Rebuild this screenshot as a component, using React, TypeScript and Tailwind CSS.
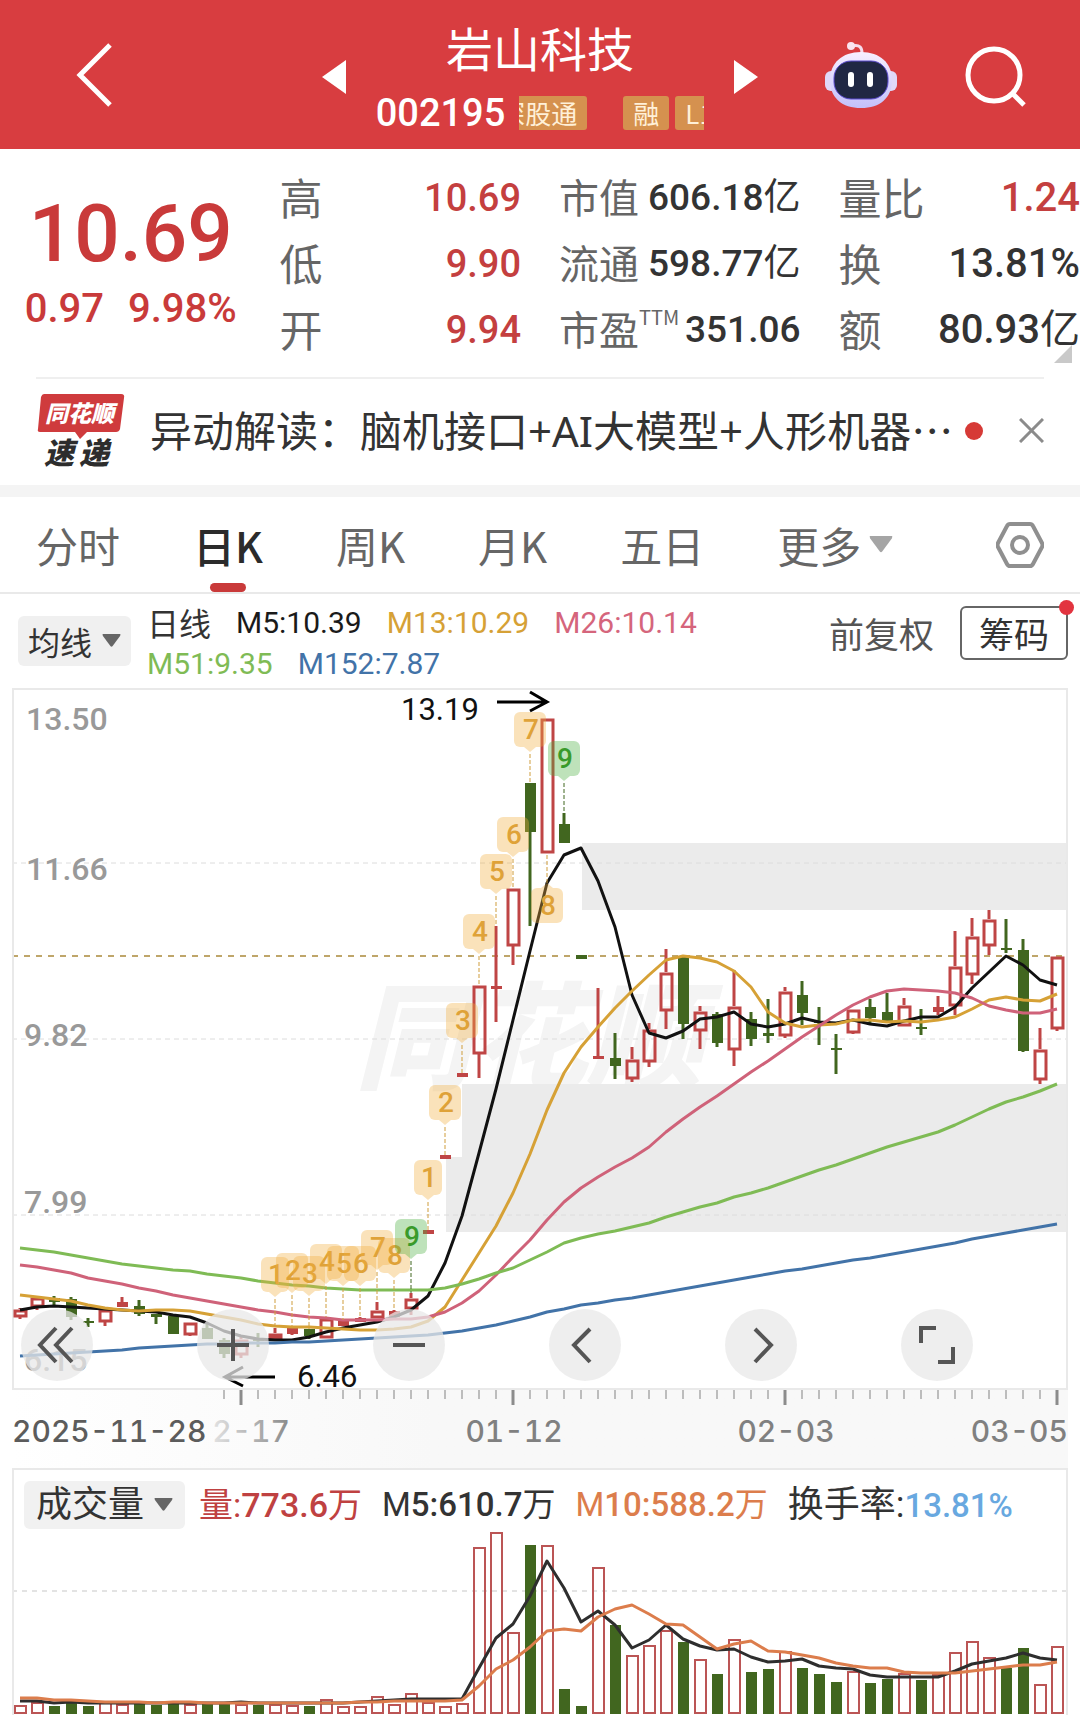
import type { ReactNode } from "react";

const RED = "#bf4545";
const GREEN = "#41661f";

const STEP = 17;
const FIRST_X = 20;

const xAt = (index: number) => FIRST_X + index * STEP;

// kind: r = hollow red, f = solid red, g = green
type Candle = [kind: "r" | "f" | "g", high: number, top: number, bottom: number, low: number];

// y positions on the plot, top to bottom
const candles: Candle[] = [
    ["r", 1308, 1309, 1317, 1319],
    ["r", 1297, 1297, 1307, 1310],
    ["g", 1296, 1298, 1302, 1305],
    ["g", 1297, 1299, 1317, 1320],
    ["g", 1318, 1321, 1323, 1327],
    ["r", 1307, 1309, 1322, 1326],
    ["f", 1297, 1302, 1307, 1307],
    ["g", 1300, 1306, 1314, 1316],
    ["g", 1314, 1314, 1317, 1324],
    ["g", 1315, 1316, 1334, 1334],
    ["r", 1322, 1322, 1335, 1336],
    ["g", 1324, 1328, 1339, 1339],
    ["g", 1338, 1340, 1354, 1358],
    ["r", 1337, 1339, 1355, 1358],
    ["g", 1333, 1339, 1341, 1347],
    ["r", 1328, 1333, 1339, 1339],
    ["f", 1326, 1328, 1334, 1335],
    ["g", 1329, 1329, 1336, 1339],
    ["r", 1317, 1318, 1338, 1338],
    ["f", 1320, 1321, 1326, 1326],
    ["f", 1317, 1318, 1322, 1322],
    ["r", 1302, 1310, 1318, 1318],
    ["f", 1310, 1311, 1317, 1317],
    ["r", 1293, 1298, 1309, 1315],
    ["f", 1230, 1230, 1234, 1234],
    ["f", 1155, 1155, 1159, 1159],
    ["f", 1073, 1073, 1077, 1077],
    ["r", 985, 985, 1054, 1078],
    ["f", 926, 986, 989, 1022],
    ["r", 888, 888, 946, 965],
    ["g", 783, 783, 832, 926],
    ["r", 718, 718, 853, 853],
    ["g", 813, 824, 843, 843],
    ["g", 955, 955, 959, 959],
    ["f", 988, 1056, 1059, 1059],
    ["g", 1033, 1058, 1066, 1079],
    ["r", 1047, 1059, 1079, 1082],
    ["r", 1023, 1029, 1062, 1067],
    ["r", 949, 972, 1011, 1029],
    ["g", 957, 957, 1024, 1039],
    ["r", 1006, 1011, 1031, 1049],
    ["g", 1012, 1014, 1043, 1047],
    ["r", 970, 1006, 1050, 1066],
    ["g", 1012, 1019, 1039, 1046],
    ["g", 999, 1033, 1036, 1043],
    ["r", 987, 991, 1036, 1038],
    ["g", 981, 995, 1013, 1025],
    ["g", 1007, 1021, 1023, 1045],
    ["g", 1034, 1048, 1050, 1074],
    ["r", 1009, 1009, 1033, 1034],
    ["g", 999, 1007, 1018, 1024],
    ["g", 993, 1012, 1022, 1022],
    ["r", 998, 1005, 1026, 1026],
    ["g", 1009, 1027, 1029, 1035],
    ["f", 996, 1007, 1012, 1015],
    ["r", 931, 966, 1006, 1015],
    ["r", 918, 936, 975, 984],
    ["r", 910, 919, 946, 955],
    ["g", 919, 948, 950, 953],
    ["g", 939, 950, 1051, 1052],
    ["r", 1028, 1049, 1080, 1084],
    ["r", 956, 956, 1029, 1031],
];

const ma5 = [
    1310, 1307, 1306, 1307, 1308, 1309, 1310, 1311, 1312, 1315, 1317, 1323, 1331, 1336, 1339, 1340,
    1340, 1337, 1332, 1328, 1325, 1322, 1317, 1310, 1296, 1263, 1216, 1153, 1089, 1020, 951, 883,
    855, 848, 881, 927, 995, 1033, 1038, 1031, 1019, 1017, 1012, 1024, 1027, 1024, 1018, 1022,
    1023, 1020, 1024, 1026, 1021, 1017, 1017, 1007, 988, 972, 956, 965, 980, 985,
];

const ma13 = [
    1295, 1297, 1299, 1301, 1305, 1308, 1310, 1311, 1310, 1310, 1311, 1314, 1317, 1320, 1324, 1326,
    1327, 1327, 1328, 1329, 1330, 1330, 1329, 1327, 1321, 1307, 1280, 1253, 1226, 1193, 1154, 1110,
    1073, 1047, 1027, 1008, 991, 975, 960, 956, 958, 962, 971, 987, 1012, 1023, 1027, 1025,
    1024, 1020, 1020, 1022, 1021, 1022, 1020, 1017, 1009, 1000, 997, 1000, 1001, 994,
];

const ma26 = [
    1265, 1267, 1270, 1273, 1278, 1281, 1284, 1288, 1291, 1295, 1298, 1301, 1304, 1307, 1310, 1312,
    1315, 1317, 1318, 1320, 1320, 1320, 1319, 1319, 1317, 1312, 1303, 1291, 1275, 1257, 1240, 1220,
    1202, 1188, 1177, 1167, 1158, 1147, 1132, 1119, 1107, 1096, 1084, 1072, 1061, 1049, 1037, 1026,
    1015, 1005, 997, 991, 989, 990, 991, 993, 998, 1006, 1010, 1013, 1013, 1009,
];

const ma51 = [
    1248, 1250, 1252, 1255, 1258, 1261, 1264, 1266, 1268, 1270, 1271, 1274, 1276, 1278, 1281, 1283,
    1285, 1286, 1288, 1289, 1290, 1290, 1290, 1290, 1290, 1288, 1284, 1279, 1273, 1268, 1260, 1252,
    1243, 1238, 1234, 1231, 1227, 1223, 1217, 1212, 1207, 1203, 1197, 1193, 1188, 1182, 1176, 1170,
    1165, 1159, 1153, 1147, 1142, 1137, 1132, 1125, 1117, 1109, 1102, 1097, 1091, 1084,
];

const ma152 = [
    1356, 1355, 1354, 1353, 1352, 1351, 1350, 1348, 1347, 1346, 1345, 1344, 1344, 1343, 1343, 1343,
    1342, 1342, 1341, 1340, 1339, 1338, 1337, 1336, 1335, 1333, 1331, 1328, 1325, 1321, 1317, 1312,
    1309, 1305, 1303, 1300, 1298, 1295, 1292, 1289, 1286, 1283, 1280, 1277, 1274, 1271, 1269, 1266,
    1263, 1260, 1258, 1255, 1252, 1249, 1246, 1243, 1239, 1236, 1233, 1230, 1227, 1224,
];

const volumes: [kind: "r" | "g", top: number][] = [
    ["r", 1705], ["r", 1702], ["g", 1706], ["g", 1702], ["g", 1706], ["r", 1702], ["r", 1704],
    ["g", 1703], ["g", 1705], ["g", 1703], ["r", 1704], ["g", 1704], ["g", 1704], ["r", 1704],
    ["g", 1705], ["r", 1704], ["r", 1705], ["g", 1706], ["r", 1699], ["r", 1706], ["r", 1706],
    ["r", 1696], ["r", 1704], ["r", 1693], ["r", 1702], ["r", 1706], ["r", 1703], ["r", 1547],
    ["r", 1532], ["r", 1632], ["g", 1545], ["r", 1545], ["g", 1689], ["g", 1706], ["r", 1567],
    ["g", 1625], ["r", 1655], ["r", 1645], ["r", 1630], ["g", 1642], ["r", 1659], ["g", 1674],
    ["r", 1639], ["g", 1672], ["g", 1669], ["r", 1651], ["g", 1668], ["g", 1674], ["g", 1682],
    ["r", 1671], ["g", 1683], ["g", 1679], ["r", 1673], ["g", 1680], ["r", 1674], ["r", 1652],
    ["r", 1641], ["r", 1657], ["g", 1668], ["g", 1648], ["r", 1684], ["r", 1646],
];

const volumeMa5 = [
    1701, 1701, 1703, 1702, 1703, 1703, 1703, 1703, 1703, 1703, 1703, 1703, 1703, 1702, 1703, 1703,
    1703, 1703, 1703, 1703, 1702, 1701, 1700, 1699, 1699, 1699, 1699, 1668, 1638, 1624, 1596, 1561,
    1588, 1622, 1611, 1625, 1648, 1640, 1625, 1639, 1646, 1650, 1649, 1657, 1662, 1661, 1659, 1666,
    1668, 1669, 1675, 1677, 1677, 1677, 1677, 1671, 1664, 1661, 1658, 1653, 1658, 1660,
];

const volumeMa10 = [
    1698, 1698, 1700, 1700, 1701, 1702, 1702, 1702, 1703, 1702, 1702, 1703, 1703, 1703, 1703, 1703,
    1703, 1703, 1703, 1703, 1702, 1702, 1701, 1701, 1701, 1701, 1700, 1686, 1669, 1660, 1647, 1631,
    1629, 1631, 1617, 1609, 1605, 1614, 1624, 1625, 1637, 1649, 1644, 1641, 1651, 1652, 1655, 1658,
    1663, 1666, 1668, 1668, 1672, 1673, 1673, 1673, 1671, 1669, 1667, 1665, 1665, 1662,
];

type Signal = { index: number; label: string; top: number; end: number; below?: boolean };

const signals: Signal[] = [
    { index: 15, label: "1", top: 1257, end: 1328 },
    { index: 16, label: "2", top: 1253, end: 1326 },
    { index: 17, label: "3", top: 1256, end: 1329 },
    { index: 18, label: "4", top: 1244, end: 1317 },
    { index: 19, label: "5", top: 1246, end: 1320 },
    { index: 20, label: "6", top: 1246, end: 1317 },
    { index: 21, label: "7", top: 1230, end: 1302 },
    { index: 22, label: "8", top: 1238, end: 1310 },
    { index: 23, label: "9", top: 1219, end: 1293 },
    { index: 24, label: "1", top: 1160, end: 1230 },
    { index: 25, label: "2", top: 1085, end: 1155 },
    { index: 26, label: "3", top: 1003, end: 1073 },
    { index: 27, label: "4", top: 914, end: 985 },
    { index: 28, label: "5", top: 854, end: 926 },
    { index: 29, label: "6", top: 817, end: 888 },
    { index: 30, label: "7", top: 712, end: 783 },
    { index: 31, label: "8", top: 888, end: 853, below: true },
    { index: 32, label: "9", top: 741, end: 813 },
];

const priceLabels = [
    { text: "13.50", x: 26, y: 730 },
    { text: "11.66", x: 26, y: 880 },
    { text: "9.82", x: 24, y: 1046 },
    { text: "7.99", x: 24, y: 1213 },
    { text: "6.15", x: 24, y: 1371 },
];

const tabs = ["分时", "日K", "周K", "月K", "五日"];

const averages = [
    { text: "M5:10.39", className: "text-[#1a1a1a]" },
    { text: "M13:10.29", className: "text-[#d6a136]" },
    { text: "M26:10.14", className: "text-[#d5657c]" },
    { text: "M51:9.35", className: "text-[#7fbb55]" },
    { text: "M152:7.87", className: "text-[#4273a8]" },
];

function Line({ values, color }: { values: number[]; color: string }) {
    const points = values.map((y, index) => `${xAt(index)},${y}`).join(" ");

    return (
        <polyline points={points} fill="none" stroke={color} strokeWidth={3} strokeLinejoin="round" />
    );
}

function CandleMark({ index, candle }: { index: number; candle: Candle }) {
    const [kind, high, top, bottom, low] = candle;
    const x = xAt(index);
    const color = kind === "g" ? GREEN : RED;

    return (
        <g stroke={color} strokeWidth={3}>
            {high < top && <line x1={x} x2={x} y1={high} y2={top} />}
            {low > bottom && <line x1={x} x2={x} y1={bottom} y2={low} />}
            {kind === "r" ? (
                <rect x={x - 5} y={top + 2} width={11} height={bottom - top - 3} fill="none" />
            ) : (
                <rect x={x - 5} y={top} width={11} height={bottom - top} fill={color} stroke="none" />
            )}
        </g>
    );
}

function SignalMark({ signal }: { signal: Signal }) {
    const { index, label, top, end, below } = signal;
    const x = xAt(index);
    const green = label === "9";
    const half = label === "1" ? 14 : 16;
    const tip = below
        ? `M${x - 6} ${top} L${x} ${top - 5} L${x + 6} ${top}Z`
        : `M${x - 6} ${top + 35} L${x} ${top + 40} L${x + 6} ${top + 35}Z`;

    return (
        <g>
            <line
                x1={x}
                x2={x}
                y1={below ? top - 5 : top + 42}
                y2={end}
                stroke={green ? GREEN : "#cf9d3c"}
                strokeWidth={1}
                strokeDasharray="4 2"
            />
            <g fill={green ? "#4caf3f" : "#f0b040"} fillOpacity={0.36}>
                <rect x={x - half} y={top} width={half * 2} height={35} rx={6} />
                <path d={tip} />
            </g>
            <text
                x={x + 1}
                y={top + 27}
                textAnchor="middle"
                fontSize={28}
                fontWeight={500}
                fill={green ? "#3a9a2b" : "#dfa238"}
            >
                {label}
            </text>
        </g>
    );
}

function PriceChart() {
    return (
        <svg
            viewBox="12 688 1056 702"
            className="block w-full font-['Roboto','Noto_Sans_CJK_SC',sans-serif]"
            role="img"
            aria-label="日K线图"
        >
            <text
                x={355}
                y={1080}
                fontSize={116}
                fontWeight={900}
                fontStyle="italic"
                fill="#f4f4f4"
                className="font-['Noto_Sans_CJK_SC',sans-serif]"
            >
                同花顺
            </text>

            <path d="M582 843H1068V910H582Z M462 1084H1068V1232H446V1157H462Z" fill="#ebebeb" />

            <g stroke="#dcdcdc" strokeDasharray="5 4">
                <line x1={12} x2={1068} y1={863} y2={863} />
                <line x1={12} x2={1068} y1={1039} y2={1039} />
                <line x1={12} x2={1068} y1={1215} y2={1215} />
            </g>
            <line x1={12} x2={1068} y1={956} y2={956} stroke="#bfa66a" strokeWidth={2} strokeDasharray="6 6" />
            <rect x={13} y={689} width={1054} height={700} fill="none" stroke="#e9e9e9" strokeWidth={2} />

            <g fontSize={32} fontWeight={500} fill="#999">
                {priceLabels.map((label) => (
                    <text key={label.text} x={label.x} y={label.y}>
                        {label.text}
                    </text>
                ))}
            </g>

            {candles.map((candle, index) => (
                <CandleMark key={index} index={index} candle={candle} />
            ))}

            <Line values={ma5} color="#111" />
            <Line values={ma13} color="#d6a136" />
            <Line values={ma26} color="#cf6279" />
            <Line values={ma51} color="#7fbb55" />
            <Line values={ma152} color="#4273a8" />

            {signals.map((signal) => (
                <SignalMark key={signal.index} signal={signal} />
            ))}

            <g fontSize={31} fill="#111">
                <text x={401} y={720}>13.19</text>
                <text x={297} y={1387}>6.46</text>
            </g>
            <g fill="none" stroke="#000" strokeWidth={3}>
                <path d="M497 702H547M530 692L547 702L530 711" />
                <path d="M275 1377H225M243 1367L225 1377L243 1386" />
            </g>
        </svg>
    );
}

function DateAxis() {
    const ticks = Array.from({ length: 50 }, (_, index) => index + 12);

    return (
        <svg
            viewBox="12 1390 1056 78"
            className="block w-full bg-linear-to-r from-white to-[#f8f8f8] to-40% font-['Inter',sans-serif] tabular-nums"
        >
            <defs>
                <linearGradient id="fade">
                    <stop offset="0" stopColor="#e2e2e2" />
                    <stop offset="1" stopColor="#8a8a8a" />
                </linearGradient>
            </defs>
            {ticks.map((index) => {
                const major = (index - 13) % 16 === 0;
                return (
                    <line
                        key={index}
                        x1={xAt(index)}
                        x2={xAt(index)}
                        y1={1390}
                        y2={major ? 1405 : 1399}
                        stroke={major ? "#8c8c8c" : "#bdbdbd"}
                        strokeWidth={major ? 3 : 2}
                    />
                );
            })}
            <g fontSize={30} fontWeight={500} fill="#808080">
                <text x={12} y={1442} fill="#5c5c5c">2025-11-28</text>
                <text x={290} y={1442} textAnchor="end" fill="url(#fade)">2-17</text>
                <text x={514} y={1442} textAnchor="middle">01-12</text>
                <text x={786} y={1442} textAnchor="middle">02-03</text>
                <text x={1068} y={1442} textAnchor="end">03-05</text>
            </g>
        </svg>
    );
}

function VolumeChart() {
    return (
        <svg viewBox="12 1531 1056 184" className="block w-full" role="img" aria-label="成交量图">
            <line x1={12} x2={1068} y1={1591} y2={1591} stroke="#e3e3e3" strokeWidth={2} strokeDasharray="5 5" />
            <path d="M13 1531V1715M1067 1531V1715" stroke="#e9e9e9" strokeWidth={2} />
            {volumes.map(([kind, top], index) =>
                kind === "g" ? (
                    <rect key={index} x={xAt(index) - 5} y={top} width={11} height={1714 - top} fill={GREEN} />
                ) : (
                    <rect
                        key={index}
                        x={xAt(index) - 5}
                        y={top + 1}
                        width={11}
                        height={1712 - top}
                        fill="none"
                        stroke="#bb5555"
                        strokeWidth={2}
                    />
                ),
            )}
            <Line values={volumeMa5} color="#2e2e2e" />
            <Line values={volumeMa10} color="#dc7d4c" />
        </svg>
    );
}

function Robot() {
    return (
        <svg width="72" height="68" viewBox="0 0 72 68">
            <defs>
                <linearGradient id="shell" x1="0" y1="0" x2="0" y2="1">
                    <stop offset="0" stopColor="#f8efff" />
                    <stop offset="1" stopColor="#c3c0fa" />
                </linearGradient>
            </defs>
            <path d="M27 5C35 3 37 7 37 12" fill="none" stroke="#f6dcec" strokeWidth="3" />
            <circle cx="26" cy="5" r="4" fill="#fbe3ef" />
            <rect x="0" y="30" width="14" height="20" rx="6" fill="#e0d8f8" />
            <rect x="58" y="30" width="14" height="20" rx="6" fill="#e0d8f8" />
            <path
                d="M36 11C55 11 67 22 67 39C67 57 55 67 36 67C17 67 5 57 5 39C5 22 17 11 36 11Z"
                fill="url(#shell)"
            />
            <rect x="9" y="20" width="54" height="38" rx="17" fill="#202743" stroke="#5b4bd0" strokeWidth="1" />
            <rect x="23" y="31" width="6" height="15" rx="3" fill="#fff" />
            <rect x="42" y="31" width="6" height="15" rx="3" fill="#fff" />
        </svg>
    );
}

function Caret({ className }: { className: string }) {
    return (
        <svg viewBox="0 0 20 14" className={className} fill="currentColor">
            <path d="M1 0H19Q20 0 19 2L11 13Q10 14 9 13L1 2Q0 0 1 0Z" />
        </svg>
    );
}

function Tag({ children }: { children: ReactNode }) {
    return (
        <span className="h-[34px] shrink-0 rounded-[3px] bg-[#d5914f] px-[10px] text-[26px] leading-[33px] text-[#fff0d8]">
            {children}
        </span>
    );
}

function Header() {
    return (
        <header className="grid h-[149px] grid-cols-[1fr_436px_1fr] bg-[#d83d40] text-white">
            <div className="flex items-center pl-[76px]">
                <button aria-label="返回">
                    <svg width="36" height="64" viewBox="0 0 36 64" fill="none" stroke="#fff" strokeWidth="5">
                        <path d="M34 2L4 32L34 62" />
                    </svg>
                </button>
            </div>

            <div className="flex justify-between">
                <button aria-label="上一只" className="pt-1">
                    <svg width="24" height="34" viewBox="0 0 24 34" fill="#fff">
                        <path d="M24 0V34L0 17Z" />
                    </svg>
                </button>
                <div className="flex flex-col items-center pt-[15px]">
                    <h1 className="text-[47px] leading-[64px]">岩山科技</h1>
                    <div className="flex h-[68px] items-center gap-[14px]">
                        <span className="font-['Roboto',sans-serif] text-[38px] font-medium">002195</span>
                        <div className="flex w-[185px] overflow-hidden">
                            <div className="-ml-[30px] flex gap-[6px]">
                                <Tag>深股通</Tag>
                                <div className="ml-[30px] flex gap-[6px]">
                                    <Tag>融</Tag>
                                    <Tag>L1</Tag>
                                </div>
                            </div>
                        </div>
                    </div>
                </div>
                <button aria-label="下一只" className="pt-1">
                    <svg width="24" height="34" viewBox="0 0 24 34" fill="#fff">
                        <path d="M0 0V34L24 17Z" />
                    </svg>
                </button>
            </div>

            <div className="flex items-center gap-[68px] pt-1 pl-[67px]">
                <button aria-label="智能助手" className="pb-1">
                    <Robot />
                </button>
                <button aria-label="搜索">
                    <svg width="62" height="62" viewBox="0 0 62 62" fill="none" stroke="#fff" strokeWidth="5">
                        <circle cx="29" cy="29" r="26" />
                        <path d="M48 48L59 59" />
                    </svg>
                </button>
            </div>
        </header>
    );
}

function Row({ label, value, red }: { label: ReactNode; value: ReactNode; red?: boolean }) {
    return (
        <div className="flex h-[66px] items-center justify-between whitespace-nowrap">
            <dt className="pb-1 text-[#666]">{label}</dt>
            <dd
                className={
                    "font-['Roboto','Noto_Sans_CJK_SC',sans-serif] font-medium " +
                    (red ? "text-[#c43f3f]" : "text-[#333]")
                }
            >
                {value}
            </dd>
        </div>
    );
}

function Yi() {
    return <span className="font-normal">亿</span>;
}

function Quote() {
    return (
        <section className="relative grid grid-cols-4 gap-[38px] pt-4 pb-[14px]">
            <div className="flex flex-col items-center pt-[14px] font-['Roboto',sans-serif] font-medium text-[#c93a3a]">
                <p className="pl-5 text-[80px] leading-[110px]">10.69</p>
                <p className="flex gap-6 pl-5 text-[40px] leading-[40px]">
                    <span>0.97</span>
                    <span>9.98%</span>
                </p>
            </div>
            <dl className="[&_dd]:text-[38px] [&_dt]:text-[43px]">
                <Row label="高" value="10.69" red />
                <Row label="低" value="9.90" red />
                <Row label="开" value="9.94" red />
            </dl>
            <dl className="[&_dd]:text-[37px] [&_dt]:text-[40px]">
                <Row label="市值" value={<>606.18<Yi /></>} />
                <Row label="流通" value={<>598.77<Yi /></>} />
                <Row
                    label={
                        <span className="flex">
                            市盈<span className="pt-1 text-[20px] leading-[30px]">TTM</span>
                        </span>
                    }
                    value="351.06"
                />
            </dl>
            <dl className="[&_dd]:text-[40px] [&_dt]:text-[43px]">
                <Row label="量比" value="1.24" red />
                <Row label="换" value="13.81%" />
                <Row label="额" value={<>80.93<Yi /></>} />
            </dl>
            <svg className="absolute right-2 bottom-[14px]" width="18" height="18" fill="#c9c9c9">
                <path d="M18 0V18H0Z" />
            </svg>
        </section>
    );
}

function News() {
    return (
        <section className="mx-9 flex h-[108px] items-center border-t-2 border-[#efefef] pb-[3px]">
            <svg width="90" height="76" viewBox="0 0 90 76" className="shrink-0" aria-label="同花顺速递">
                <path d="M8 1H85Q89 1 88 5L84 36Q83 39 80 39H51L44 46L39 39H4Q1 39 2 36L5 4Q6 1 8 1Z" fill="#cf3b3d" />
                <g fontWeight="900" fontStyle="italic" className="font-['Noto_Sans_CJK_SC',sans-serif]">
                    <text x="9" y="29" fontSize="23" fill="#fff">同花顺</text>
                    <text x="8" y="71" fontSize="30" fill="#2d2d2d">速</text>
                    <text x="43" y="71" fontSize="30" fill="#2d2d2d">递</text>
                </g>
            </svg>
            <a
                href="#news"
                className="ml-6 truncate font-['Noto_Sans','Noto_Sans_CJK_SC',sans-serif] text-[42px] text-[#333]"
            >
                异动解读：脑机接口+AI大模型+人形机器⋯
            </a>
            <span className="ml-auto size-[18px] shrink-0 rounded-full bg-[#d63a36]" />
            <button aria-label="关闭" className="ml-9 shrink-0">
                <svg width="25" height="25" viewBox="0 0 25 25" stroke="#8b8b8b" strokeWidth="3">
                    <path d="M1 1L24 24M24 1L1 24" />
                </svg>
            </button>
        </section>
    );
}

function Tabs() {
    return (
        <nav className="flex h-[97px] items-center gap-[73px] border-b-2 border-[#e9e9e9] px-9 text-[42px] text-[#666]">
            {tabs.map((tab) => (
                <button
                    key={tab}
                    className={tab === "日K" ? "relative h-full font-medium text-[#2b2b2b]" : "h-full"}
                >
                    {tab}
                    {tab === "日K" && (
                        <span className="absolute bottom-0 left-1/2 h-[9px] w-9 -translate-x-1/2 rounded-full bg-[#c93a3a]" />
                    )}
                </button>
            ))}
            <button className="flex items-center gap-2">
                更多
                <Caret className="w-6 text-[#a5a5a5]" />
            </button>
            <button aria-label="设置" className="ml-auto">
                <svg width="48" height="46" viewBox="0 0 48 46" fill="none" stroke="#8f8f8f" strokeWidth="4">
                    <path d="M14 2H34Q36 2 37 4L46 21Q47 23 46 25L37 42Q36 44 34 44H14Q12 44 11 42L2 25Q1 23 2 21L11 4Q12 2 14 2Z" />
                    <circle cx="24" cy="23" r="8" />
                </svg>
            </button>
        </nav>
    );
}

function AverageBar() {
    return (
        <section className="flex h-[94px] items-center pr-3 pl-[18px]">
            <button className="flex h-[50px] shrink-0 items-center gap-[10px] rounded-md bg-[#f0f0f0] px-[10px] text-[32px] text-[#333]">
                均线
                <Caret className="w-[19px] text-[#666]" />
            </button>
            <p className="ml-4 flex w-[580px] flex-wrap gap-x-[25px] pt-1 font-['Roboto',sans-serif] text-[30px] leading-[41px]">
                <span className="font-['Noto_Sans_CJK_SC',sans-serif] text-[32px] text-[#333]">日线</span>
                {averages.map((average) => (
                    <span key={average.text} className={average.className}>
                        {average.text}
                    </span>
                ))}
            </p>
            <div className="ml-auto flex items-center gap-[26px] pb-4 text-[35px]">
                <button className="text-[#555]">前复权</button>
                <button className="relative h-[54px] w-[108px] rounded-md border-2 border-[#666] leading-[48px] text-[#333]">
                    筹码
                    <span className="absolute -top-2 -right-2 size-[15px] rounded-full bg-[#e2343f]" />
                </button>
            </div>
        </section>
    );
}

function Control({ label, path }: { label: string; path: string }) {
    return (
        <button aria-label={label} className="grid size-[72px] place-items-center rounded-full bg-[#e8e8e8]/75">
            <svg width="40" height="40" viewBox="0 0 40 40" fill="none" stroke="#555" strokeWidth="4">
                <path d={path} />
            </svg>
        </button>
    );
}

export default function App() {
    return (
        <main className="bg-white pb-[9px] font-['Noto_Sans_CJK_SC',sans-serif]">
            <Header />
            <Quote />
            <News />
            <div className="h-3 bg-[#f4f4f4]" />
            <Tabs />
            <AverageBar />

            <section className="relative mx-3">
                <PriceChart />
                <div className="absolute bottom-[9px] left-[9px] flex gap-[104px]">
                    <Control label="最早" path="M19 3L3 20L19 37M35 3L19 20L35 37" />
                    <Control label="放大" path="M4 20H36M20 4V36" />
                    <Control label="缩小" path="M4 20H36" />
                    <Control label="左移" path="M25 4L9 20L25 37" />
                    <Control label="右移" path="M14 4L30 20L14 37" />
                    <Control label="全屏" path="M4 18V3H19M36 22V37H21" />
                </div>
            </section>

            <section className="mx-3">
                <DateAxis />
            </section>

            <section className="mx-3 border-t-2 border-[#e9e9e9]">
                <div className="flex h-[61px] items-center gap-5 border-x-2 border-[#e9e9e9] px-[10px] pt-[9px] font-['Roboto','Noto_Sans_CJK_SC',sans-serif] text-[33px] whitespace-nowrap">
                    <button className="flex h-12 items-center gap-[10px] rounded-md bg-[#f1f1f1] px-3 text-[36px] text-[#333]">
                        成交量
                        <Caret className="w-[19px] text-[#666]" />
                    </button>
                    <span className="-ml-[6px] text-[34px] text-[#bf4141]">
                        量:<span className="font-medium">773.6</span>万
                    </span>
                    <span className="text-[#333]">
                        M<span className="font-medium">5:610.7</span>万
                    </span>
                    <span className="text-[#dc7d4c]">
                        M<span className="font-medium">10:588.2</span>万
                    </span>
                    <span className="text-[36px] text-[#333]">
                        换手率:<span className="text-[33px] font-medium text-[#68a8e0]">13.81%</span>
                    </span>
                </div>
                <VolumeChart />
            </section>
        </main>
    );
}
